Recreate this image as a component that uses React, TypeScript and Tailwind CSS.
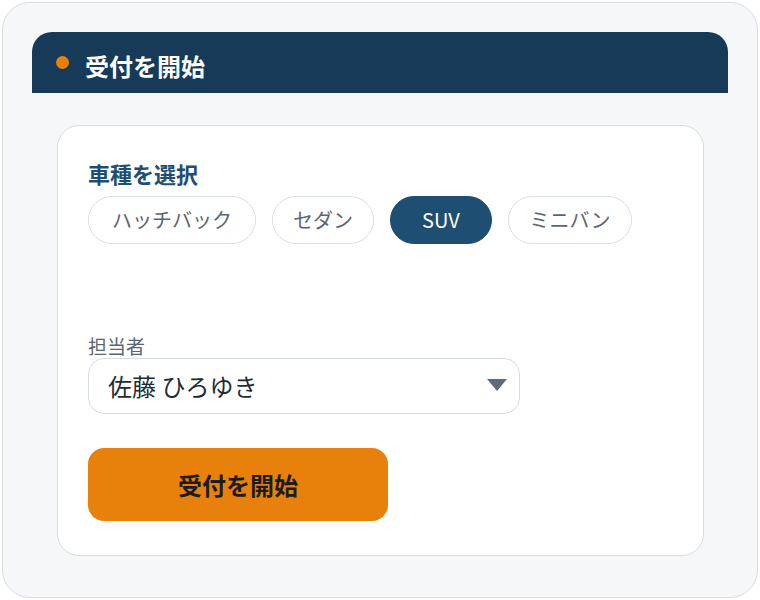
import React, { useState } from 'react';

const font = { fontFamily: '"Noto Sans CJK JP", "Noto Sans", sans-serif' };

const carTypes = [
  { label: 'ハッチバック', w: 'w-[168px]' },
  { label: 'セダン', w: 'w-[102px]' },
  { label: 'SUV', w: 'w-[102px]' },
  { label: 'ミニバン', w: 'w-[124px]' },
];

const App: React.FC = () => {
  const [selected, setSelected] = useState('SUV');

  return (
    <div className="w-[760px] h-[600px] p-[2px] bg-white" style={font}>
      <div className="w-[756px] h-[596px] rounded-[28px] border border-[#d6dde5] bg-[#f5f7f9] pt-[29px] px-[29px]">
        {/* Header */}
        <div className="h-[61px] rounded-t-[20px] bg-[#173a58] flex items-center pl-[24px] gap-[16px]">
          <span className="w-[13px] h-[13px] rounded-full bg-[#e8800c]" />
          <h1 className="mt-[6px] text-white text-[24px] font-bold leading-none">受付を開始</h1>
        </div>

        {/* Card */}
        <div className="mt-[32px] ml-[25px] mr-[24px] h-[431px] rounded-[22px] border border-[#d6dde5] bg-white pt-[32px] px-[30px]">
          <h2 className="text-[#1f4e73] text-[22px] font-bold leading-[30px]">車種を選択</h2>
          <div className="mt-[8px] flex gap-[16px]">
            {carTypes.map(t => {
              const active = t.label === selected;
              return (
                <button
                  key={t.label}
                  onClick={() => setSelected(t.label)}
                  className={`${t.w} h-[48px] rounded-full text-[20px] border ${
                    active
                      ? 'bg-[#1f4e73] text-white border-[#1f4e73]'
                      : 'bg-white text-[#5a6673] border-[#d9e0e6]'
                  }`}
                >
                  {t.label}
                </button>
              );
            })}
          </div>

          <label className="block mt-[89px] text-[#5a6673] text-[19px] leading-[25px]">担当者</label>
          <div className="w-[432px] h-[56px] rounded-[16px] border border-[#d6dde5] bg-white flex items-center justify-between pl-[19px] pr-[12px]">
            <span className="text-[#222b33] text-[24px]">佐藤 ひろゆき</span>
            <svg width="20" height="14" viewBox="0 0 20 14">
              <path d="M0 0 H20 L10 12 Z" fill="#5e6b78" />
            </svg>
          </div>

          <button className="mt-[34px] w-[300px] h-[73px] rounded-[16px] bg-[#e8800c] text-[#1c1c1c] text-[24px] font-bold">
            受付を開始
          </button>
        </div>
      </div>
    </div>
  );
};

export default App;
